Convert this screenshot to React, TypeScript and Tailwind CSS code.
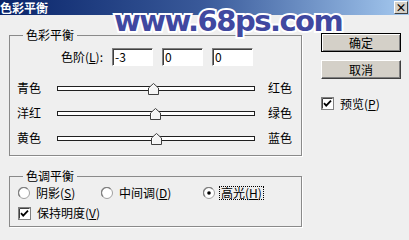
import React from 'react';

const sunken =
  'border border-t-[#808080] border-l-[#808080] border-b-white border-r-white shadow-[inset_1px_1px_0_#404040]';

function Field({ value }: { value: string }) {
  return (
    <div className={`w-[41px] h-[18px] bg-white ${sunken} flex items-center pl-[2px] text-[12px] leading-none`}>
      {value}
    </div>
  );
}

function Thumb({ left }: { left: number }) {
  return (
    <svg
      className="absolute top-[-4px]"
      style={{ left }}
      width="11"
      height="12"
      viewBox="0 0 11 12"
    >
      <path d="M0.5 11.5 V5 L5.5 0.5 L10.5 5 V11.5 Z" fill="#f4f4f4" stroke="#404040" />
      <path d="M1.5 10.5 V5.4 L5.5 1.8" fill="none" stroke="#ffffff" />
    </svg>
  );
}

function SliderRow({ left, right, pos }: { left: string; right: string; pos: number }) {
  return (
    <div className="h-[24px] flex items-center pl-[7px]">
      <span className="w-[40px]">{left}</span>
      <div className="relative w-[198px] h-[5px] bg-white border border-[#202020]">
        <Thumb left={pos} />
      </div>
      <span className="ml-[13px]">{right}</span>
    </div>
  );
}

function Radio({ checked, label, hotkey, focus }: { checked?: boolean; label: string; hotkey: string; focus?: boolean }) {
  return (
    <div className="flex items-center gap-[6px]">
      <svg width="12" height="12" viewBox="0 0 12 12">
        <circle cx="6" cy="6" r="5.5" fill="#ffffff" stroke="#a0a0a0" />
        <path d="M2 9.5 A5 5 0 0 1 9.5 2" fill="none" stroke="#808080" strokeWidth="1.2" />
        {checked && <circle cx="6" cy="6" r="1.8" fill="#000000" />}
      </svg>
      <span className={focus ? 'outline outline-1 outline-dotted outline-black px-[1px] -ml-[1px]' : ''}>
        {label}(<span className="underline">{hotkey}</span>)
      </span>
    </div>
  );
}

function Check({ label, hotkey }: { label: string; hotkey: string }) {
  return (
    <div className="flex items-center gap-[6px]">
      <svg width="13" height="13" viewBox="0 0 13 13">
        <rect x="0.5" y="0.5" width="12" height="12" fill="#ffffff" stroke="#808080" />
        <path d="M1.5 11.5 V1.5 H11.5" fill="none" stroke="#404040" />
        <path d="M3 6.2 L5.2 8.6 L10 3.6" fill="none" stroke="#000000" strokeWidth="1.8" />
      </svg>
      <span>
        {label}(<span className="underline">{hotkey}</span>)
      </span>
    </div>
  );
}

function Button({ label, isDefault }: { label: string; isDefault?: boolean }) {
  return (
    <div
      className={`w-[80px] h-[19px] bg-[#d4d0c8] flex items-center justify-center ${
        isDefault
          ? 'border border-black shadow-[inset_1px_1px_0_#ffffff,inset_-1px_-1px_0_#808080]'
          : 'border border-t-white border-l-white border-b-[#404040] border-r-[#404040] shadow-[inset_-1px_-1px_0_#808080]'
      }`}
    >
      {label}
    </div>
  );
}

export default function App() {
  return (
    <div className="relative w-[409px] h-[240px] overflow-hidden bg-[#efefef] text-[12px] leading-[12px] text-black font-['Noto_Sans_CJK_SC','Noto_Sans',sans-serif]">
      <div className="h-[15px] flex items-center justify-between bg-gradient-to-r from-[#0a246a] via-[#3a5a9a] to-[#a6caf0]">
        <span className="text-white font-bold text-[12px] leading-[14px]">色彩平衡</span>
        <div className="mr-[1px] w-[14px] h-[13px] bg-[#d4d0c8] border border-t-white border-l-white border-b-[#404040] border-r-[#404040] flex items-center justify-center text-[11px] font-bold leading-[11px]">
          ×
        </div>
      </div>

      <div className="flex pl-[9px] pt-[14px]">
        <div className="flex flex-col">
          <fieldset className="w-[293px] border border-[#8a8a8a] shadow-[1px_1px_0_#ffffff] pb-[5px]">
            <legend className="ml-[13px] px-[3px] leading-[12px]">色彩平衡</legend>
            <div className="mt-[7px] flex items-center">
              <div className="w-[102px] flex justify-end pr-[9px]">
                色阶(<span className="underline">L</span>):
              </div>
              <div className="flex gap-[9px]">
                <Field value="-3" />
                <Field value="0" />
                <Field value="0" />
              </div>
            </div>
            <div className="mt-[10px] flex flex-col gap-[1px]">
              <SliderRow left="青色" right="红色" pos={90} />
              <SliderRow left="洋红" right="绿色" pos={92} />
              <SliderRow left="黄色" right="蓝色" pos={93} />
            </div>
          </fieldset>

          <fieldset className="mt-[14px] w-[293px] border border-[#8a8a8a] shadow-[1px_1px_0_#ffffff] pb-[6px]">
            <legend className="ml-[13px] px-[3px] leading-[12px]">色调平衡</legend>
            <div className="mt-[4px] h-[14px] flex items-center">
              <div className="w-[91px] pl-[8px]">
                <Radio label="阴影" hotkey="S" />
              </div>
              <div className="w-[102px]">
                <Radio label="中间调" hotkey="D" />
              </div>
              <Radio label="高光" hotkey="H" checked focus />
            </div>
            <div className="mt-[6px] h-[14px] flex items-center pl-[8px]">
              <Check label="保持明度" hotkey="V" />
            </div>
          </fieldset>
        </div>

        <div className="ml-[19px] pt-[4px] flex flex-col gap-[8px]">
          <Button label="确定" isDefault />
          <Button label="取消" />
          <div className="mt-[10px]">
            <Check label="预览" hotkey="P" />
          </div>
        </div>
      </div>

      <div className="absolute left-[114px] top-[6px] text-[29px] leading-[30px] font-bold tracking-[-1.5px] text-[#4048a0] font-['DejaVu_Sans',sans-serif] [-webkit-text-stroke:4px_#ffffff] [paint-order:stroke_fill]">
        www.68ps.com
      </div>
    </div>
  );
}
